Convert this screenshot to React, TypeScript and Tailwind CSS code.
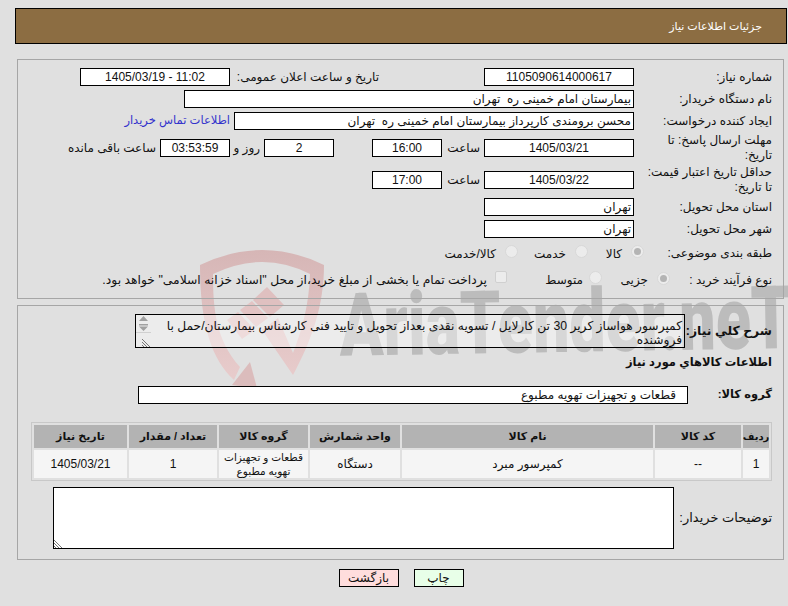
import React from "react";

const boxBase = "flex items-center border border-black bg-white h-[18px] text-[12px] shrink-0";

function Box({ w, children, center = true, extra = "" }: { w: string; children?: React.ReactNode; center?: boolean; extra?: string }) {
  return <div className={`${boxBase} ${w} ${center ? "justify-center" : "justify-start pr-[2px]"} ${extra}`}>{children}</div>;
}

function Row({ h, label, children, labelW = "w-[138px]" }: { h: string; label: React.ReactNode; children?: React.ReactNode; labelW?: string }) {
  return (
    <div className={`flex items-center ${h}`}>
      <div className={`-mr-px ${labelW} shrink-0 whitespace-nowrap leading-[15px]`}>{label}</div>
      {children}
    </div>
  );
}

function Radio({ on = false, className = "" }: { on?: boolean; className?: string }) {
  return (
    <span className={`relative flex w-[13px] h-[13px] shrink-0 items-center justify-center rounded-full border border-[#d8d8d8] bg-[#ececec] ${className}`}>
      {on && <span className="w-[7px] h-[7px] rounded-full bg-[#b4b4b4]" />}
    </span>
  );
}

function Grip({ className = "" }: { className?: string }) {
  return (
    <svg width="9" height="9" viewBox="0 0 9 9" className={className}>
      <path d="M0 1 L8 9 M0 4 L5 9 M0 7 L2 9" stroke="#777" strokeWidth="1" fill="none" />
    </svg>
  );
}

function Watermark() {
  return (
    <svg className="absolute left-0 top-0 pointer-events-none" width="788" height="606" viewBox="0 0 788 606">
      <defs>
        <linearGradient id="shieldFill" x1="0" y1="0" x2="0" y2="1">
          <stop offset="0" stopColor="#d6b6b6" />
          <stop offset="1" stopColor="#e8cccc" />
        </linearGradient>
      </defs>
      <g transform="rotate(-1 560 352)">
        <text
          x="340"
          y="352"
          direction="ltr"
          textLength="452"
          lengthAdjust="spacingAndGlyphs"
          fontFamily="Roboto, sans-serif"
          fontWeight="900"
          fontSize="88"
          fill="#bcbcbc"
        >
          AriaTender.neT
        </text>
      </g>
      <g fill="url(#shieldFill)">
        <path d="M200 265 Q263 235 324 265 C324 305 312 340 293 375 L262 330 L278 318 L293 353 C302 330 309 305 310 274 Q263 250 213 274 C213 310 216 340 240 367 L234 380 C212 360 200 325 200 265 Z" />
      </g>
      <path d="M232 385 L250 362 L257 388 Z" fill="#dbbcbc" />
      <path d="M227 320 L238 312 L255 330 L242 339 Z" fill="#e3c4c4" />
      <path d="M240 310 L252 301 L268 318 L256 327 Z" fill="#e3c4c4" />
      <path d="M253 300 L267 287 L284 305 L270 317 Z" fill="#dfc0c0" />
    </svg>
  );
}

export default function App() {
  return (
    <div
      dir="rtl"
      className="relative w-[788px] h-[606px] overflow-hidden bg-[#e0e0e0] text-[12px] text-[#111] font-['Liberation_Sans','DejaVu_Sans',sans-serif]"
    >
      <Watermark />
      <div className="relative flex flex-col pt-[8px] pr-px pl-[15px]">
        <header className="flex h-[36px] items-center border border-black bg-[#8c6d42] pr-[24px] text-[11px] text-white">جزئیات اطلاعات نیاز</header>

        <section className="mt-[15px] mr-[3px] ml-[2px] h-[240px] border border-[#a6a6a6] pt-[6px] pr-[12px]">
          <Row h="h-[22px]" label="شماره نیاز:">
            <Box w="w-[150px]">1105090614000617</Box>
            <div className="mr-[105px] w-[149px] shrink-0">تاریخ و ساعت اعلان عمومی:</div>
            <Box w="w-[150px]"><span dir="ltr">1405/03/19 - 11:02</span></Box>
          </Row>
          <Row h="h-[22px]" label="نام دستگاه خریدار:">
            <Box w="w-[450px]" center={false}>بیمارستان امام خمینی ره&nbsp; تهران</Box>
          </Row>
          <Row h="h-[22px]" label="ایجاد کننده درخواست:">
            <Box w="w-[400px]" center={false}>محسن برومندی کارپرداز بیمارستان امام خمینی ره&nbsp; تهران</Box>
            <a className="mr-[4px] text-[11.5px] text-[#3333cc]">اطلاعات تماس خریدار</a>
          </Row>
          <Row h="h-[32px]" label={<>مهلت ارسال پاسخ: تا<br />تاریخ:</>}>
            <Box w="w-[150px]">1405/03/21</Box>
            <span className="mr-[4px] w-[38px] shrink-0">ساعت</span>
            <Box w="w-[70px]">16:00</Box>
            <div className="w-[38px] shrink-0" />
            <Box w="w-[70px]">2</Box>
            <span className="mr-[4px] w-[30px] shrink-0">روز و</span>
            <Box w="w-[70px]" extra="bg-[#ffffee]">03:53:59</Box>
            <span className="mr-[4px]">ساعت باقی مانده</span>
          </Row>
          <Row h="h-[32px]" label={<>حداقل تاریخ اعتبار قیمت:<br />تا تاریخ:</>}>
            <Box w="w-[150px]">1405/03/22</Box>
            <span className="mr-[4px] w-[38px] shrink-0">ساعت</span>
            <Box w="w-[70px]">17:00</Box>
          </Row>
          <Row h="h-[22px]" label="استان محل تحویل:">
            <Box w="w-[150px]" center={false}>تهران</Box>
          </Row>
          <Row h="h-[22px]" label="شهر محل تحویل:">
            <Box w="w-[150px]" center={false}>تهران</Box>
          </Row>
          <Row h="h-[27px]" labelW="w-[128px]" label="طبقه بندی موضوعی:">
            <Radio on className="-translate-y-[2px]" />
            <span className="mr-[9px] w-[32px]">کالا</span>
            <Radio className="mr-[2px] -translate-y-[2px]" />
            <span className="mr-[9px] w-[40px]">خدمت</span>
            <Radio className="mr-[8px] -translate-y-[2px]" />
            <span className="mr-[9px]">کالا/خدمت</span>
          </Row>
          <Row h="h-[26px]" labelW="w-[102px]" label="نوع فرآیند خرید :">
            <Radio on className="-translate-y-[2px]" />
            <span className="mr-[9px] w-[44px]">جزیی</span>
            <Radio className="mr-[2px] -translate-y-[3px]" />
            <span className="mr-[6px] w-[75px]">متوسط</span>
            <span className="mr-[1px] h-[12px] w-[12px] shrink-0 -translate-y-[3px] rounded-[2px] border border-[#d0d0d0] bg-[#ececec]" />
            <span className="mr-[8px] whitespace-nowrap text-[12.35px]">پرداخت تمام یا بخشی از مبلغ خرید،از محل "اسناد خزانه اسلامی" خواهد بود.</span>
          </Row>
        </section>

        <section className="mt-[6px] mr-[3px] ml-[2px] h-[255px] border border-[#a6a6a6] pr-[12px]">
          <div className="mt-[8px] flex items-center h-[34px]">
            <div className="-mr-px w-[87px] shrink-0 whitespace-nowrap text-[12.4px] font-bold">شرح کلي نیاز:</div>
            <div className="flex h-[34px] w-[550px] shrink-0 border border-black bg-white/40">
              <div className="flex-1 pr-[2px] pt-[4px] text-[12.25px] leading-[14px]">کمپرسور هواساز کریر 30 تن کارلایل / تسویه نقدی بعداز تحویل و تایید فنی کارشناس بیمارستان/حمل با فروشنده</div>
              <div className="flex w-[15px] shrink-0 flex-col bg-[#ececec]">
                <svg width="15" height="17" viewBox="0 0 15 17">
                  <path d="M7.5 1 L12 6 L3 6 Z M3 9 H12 V10.5 H3 Z M3 11.5 L12 11.5 L7.5 16 Z" fill="#a0a0a0" />
                </svg>
                <div className="flex-1 border-t border-[#d0d0d0] flex items-end"><Grip /></div>
              </div>
            </div>
          </div>
          <div className="-mr-px mt-[6px] flex items-center h-[17px] text-[11.5px] font-bold">اطلاعات کالاهاي مورد نیاز</div>
          <div className="mt-[15px] flex items-center h-[18px]">
            <div className="-mr-px w-[84px] shrink-0 text-[11.5px] font-bold">گروه کالا:</div>
            <Box w="w-[550px]" center={false} extra="pr-[11px] text-[11.4px]">قطعات و تجهیزات تهویه مطبوع</Box>
          </div>
          <div className="mt-[18px] -mr-[1px] ml-[13px] grid grid-cols-[26px_86px_251px_90px_89px_88px_93px] gap-[2px] border border-[#c8c8c8] p-[2px] text-center">
            <div className="flex h-[23px] items-center justify-center whitespace-nowrap bg-[#b3b3b3] text-[10px] font-bold">ردیف</div>
            {["کد کالا", "نام کالا", "واحد شمارش", "گروه کالا", "تعداد / مقدار", "تاریخ نیاز"].map((t) => (
              <div key={t} className="flex h-[23px] items-center justify-center whitespace-nowrap bg-[#b3b3b3] text-[11px] font-bold">{t}</div>
            ))}
            {["1", "--", "کمپرسور مبرد", "دستگاه"].map((t, i) => (
              <div key={i} className="flex h-[28px] items-center justify-center bg-[#f5f5f5]">{t}</div>
            ))}
            <div className="h-[28px] bg-[#f5f5f5] whitespace-nowrap text-[10.5px] leading-[14px]">قطعات و تجهیزات<br />تهویه مطبوع</div>
            <div className="flex h-[28px] items-center justify-center bg-[#f5f5f5]">1</div>
            <div className="flex h-[28px] items-center justify-center bg-[#f5f5f5]">1405/03/21</div>
          </div>
          <div className="mt-[6px] flex items-center h-[62px]">
            <div className="-mr-px w-[98px] shrink-0 whitespace-nowrap text-[13px]">توضیحات خریدار:</div>
            <div className="relative flex h-[62px] w-[621px] shrink-0 items-end border border-black bg-white">
              <div className="flex-1" />
              <Grip />
            </div>
          </div>
        </section>

        <div className="mt-[9px] flex justify-center gap-[15px]">
          <button className="h-[18px] w-[50px] border border-black bg-[#e8ffe8] text-[12px] leading-none">چاپ</button>
          <button className="h-[18px] w-[60px] border border-black bg-[#ffdddd] text-[12px] leading-none">بازگشت</button>
        </div>
      </div>
    </div>
  );
}
